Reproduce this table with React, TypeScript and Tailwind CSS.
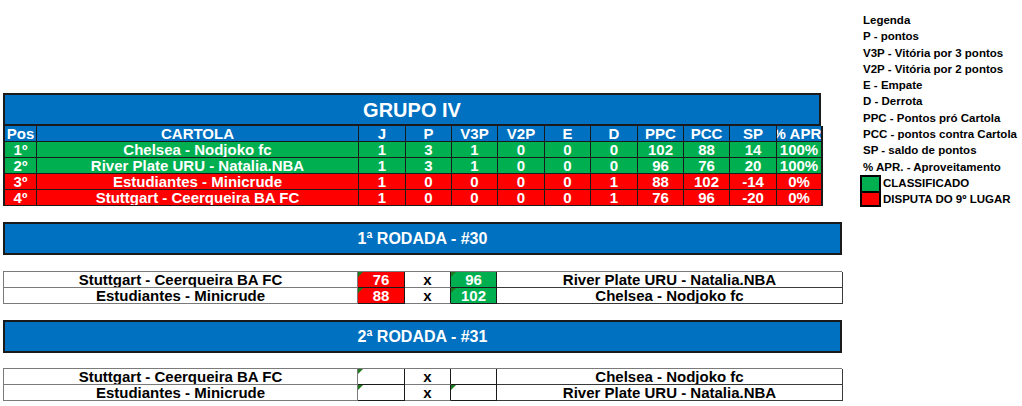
import React from 'react';

type Team = {
  pos: string;
  name: string;
  stats: string[];
  tone: 'green' | 'red';
};

const standings: Team[] = [
  { pos: '1º', name: 'Chelsea - Nodjoko fc', stats: ['1', '3', '1', '0', '0', '0', '102', '88', '14', '100%'], tone: 'green' },
  { pos: '2º', name: 'River Plate URU - Natalia.NBA', stats: ['1', '3', '1', '0', '0', '0', '96', '76', '20', '100%'], tone: 'green' },
  { pos: '3º', name: 'Estudiantes - Minicrude', stats: ['1', '0', '0', '0', '0', '1', '88', '102', '-14', '0%'], tone: 'red' },
  { pos: '4º', name: 'Stuttgart - Ceerqueira BA FC', stats: ['1', '0', '0', '0', '0', '1', '76', '96', '-20', '0%'], tone: 'red' },
];

const headers = ['Pos', 'CARTOLA', 'J', 'P', 'V3P', 'V2P', 'E', 'D', 'PPC', 'PCC', 'SP', '% APR.'];

const legend = [
  'Legenda',
  'P - pontos',
  'V3P - Vitória por 3 pontos',
  'V2P - Vitória por 2 pontos',
  'E - Empate',
  'D - Derrota',
  'PPC - Pontos pró Cartola',
  'PCC - pontos contra Cartola',
  'SP - saldo de pontos',
  '% APR. - Aproveitamento',
];

type Match = {
  home: string;
  away: string;
  homeScore?: string;
  awayScore?: string;
  homeMark?: boolean;
  awayMark?: boolean;
};

const rodada30: Match[] = [
  { home: 'Stuttgart - Ceerqueira BA FC', away: 'River Plate URU - Natalia.NBA', homeScore: '76', awayScore: '96', homeMark: true, awayMark: true },
  { home: 'Estudiantes - Minicrude', away: 'Chelsea - Nodjoko fc', homeScore: '88', awayScore: '102', homeMark: true, awayMark: true },
];

const rodada31: Match[] = [
  { home: 'Stuttgart - Ceerqueira BA FC', away: 'Chelsea - Nodjoko fc', homeMark: true },
  { home: 'Estudiantes - Minicrude', away: 'River Plate URU - Natalia.NBA', homeMark: true, awayMark: true },
];

const cellBase =
  'flex h-4 items-center justify-center overflow-hidden whitespace-nowrap border-r border-b border-[#1a1a1a] text-[15px] leading-4 font-bold';

function Marker() {
  return (
    <span className="absolute left-0 top-0 h-0 w-0 border-t-[5px] border-r-[5px] border-t-[#1f7a1f] border-r-transparent" />
  );
}

function GroupTable() {
  return (
    <div className="w-[818px]">
      <div className="flex h-[33px] items-center justify-center border-2 border-[#1a1a1a] bg-[#0070C0] text-[20px] font-bold text-white">
        GRUPO IV
      </div>
      <div className="grid grid-cols-[32px_322px_47px_46px_46px_47px_46px_47px_46px_46px_47px_46px] border-l-2 border-[#1a1a1a] text-white">
        {headers.map((h, i) => (
          <div key={h} className={`${cellBase} bg-[#0070C0] ${i === headers.length - 1 ? 'border-r-2' : ''}`}>
            {h}
          </div>
        ))}
        {standings.map((t) => {
          const bg = t.tone === 'green' ? 'bg-[#00B050]' : 'bg-[#FF0000]';
          return (
            <React.Fragment key={t.pos}>
              <div className={`${cellBase} ${bg}`}>{t.pos}</div>
              <div className={`${cellBase} ${bg}`}>{t.name}</div>
              {t.stats.map((s, i) => (
                <div key={i} className={`${cellBase} ${bg} ${i === t.stats.length - 1 ? 'border-r-2' : ''}`}>
                  {s}
                </div>
              ))}
            </React.Fragment>
          );
        })}
      </div>
    </div>
  );
}

function RoundBand({ title }: { title: string }) {
  return (
    <div className="flex h-[33px] w-[839px] items-center justify-center border-2 border-[#1a1a1a] bg-[#0070C0] text-[16px] font-bold text-white">
      {title}
    </div>
  );
}

function ScoreCell({ value, win, mark }: { value?: string; win?: boolean; mark?: boolean }) {
  let bg = 'bg-white';
  if (value) bg = win ? 'bg-[#00B050]' : 'bg-[#FF0000]';
  return (
    <div className={`${cellBase} relative ${bg} text-white`}>
      {mark && <Marker />}
      {value}
    </div>
  );
}

function MatchTable({ matches }: { matches: Match[] }) {
  return (
    <div className="grid w-[839px] grid-cols-[354px_47px_46px_46px_346px] border-l border-t border-[#7a7a7a] text-black">
      {matches.map((m, i) => {
        const hs = m.homeScore ? Number(m.homeScore) : 0;
        const as = m.awayScore ? Number(m.awayScore) : 0;
        return (
          <React.Fragment key={i}>
            <div className={`${cellBase} border-[#7a7a7a]`}>{m.home}</div>
            <ScoreCell value={m.homeScore} win={hs > as} mark={m.homeMark} />
            <div className={`${cellBase} border-b-[#7a7a7a]`}>x</div>
            <ScoreCell value={m.awayScore} win={as > hs} mark={m.awayMark} />
            <div className={`${cellBase} border-[#3a3a3a]`}>{m.away}</div>
          </React.Fragment>
        );
      })}
    </div>
  );
}

function Legend() {
  return (
    <div className="ml-[3px] pt-[12px] text-[11.5px] font-bold text-black">
      {legend.map((l) => (
        <div key={l} className="h-[16.3px] whitespace-nowrap pl-[3px] leading-[16.3px]">
          {l}
        </div>
      ))}
      <div className="flex h-[16px] items-center">
        <span className="h-full w-[21px] border-2 border-b-0 border-black bg-[#00B050]" />
        <span className="pl-[2px] leading-4">CLASSIFICADO</span>
      </div>
      <div className="flex h-[16px] items-center">
        <span className="h-full w-[21px] border-2 border-black bg-[#FF0000]" />
        <span className="pl-[2px] leading-4">DISPUTA DO 9º LUGAR</span>
      </div>
    </div>
  );
}

export default function App() {
  return (
    <div
      className="flex h-[406px] w-[1022px] overflow-hidden bg-white"
      style={{ fontFamily: '"Liberation Sans", Arial, sans-serif' }}
    >
      <div className="flex w-[857px] flex-col pl-[3px]">
        <div className="pt-[93px]">
          <GroupTable />
        </div>
        <div className="mt-[16px]">
          <RoundBand title="1ª RODADA - #30" />
        </div>
        <div className="mt-[16px]">
          <MatchTable matches={rodada30} />
        </div>
        <div className="mt-[16px]">
          <RoundBand title="2ª RODADA - #31" />
        </div>
        <div className="mt-[15px]">
          <MatchTable matches={rodada31} />
        </div>
      </div>
      <Legend />
    </div>
  );
}
